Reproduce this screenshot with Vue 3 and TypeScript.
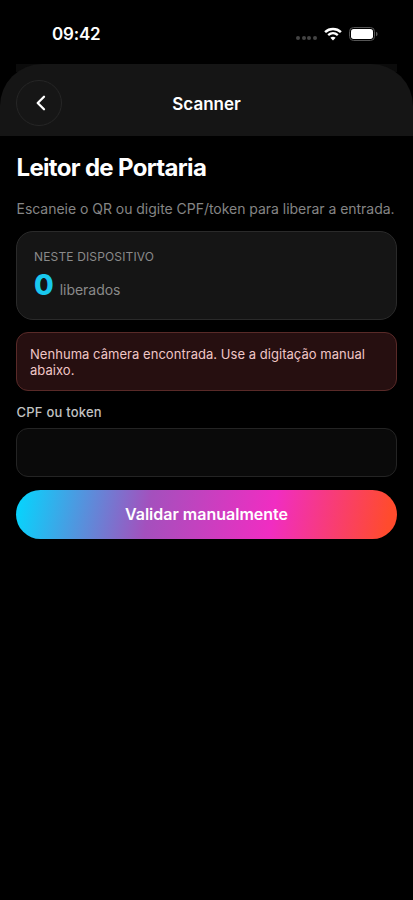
<script setup lang="ts">
import { ref } from 'vue'

const released = ref<number>(0)
const code = ref<string>('')
const signalDots: number[] = [0, 1, 2, 3]
</script>

<template>
  <div class="screen">
    <div class="status">
      <span class="clock">09:42</span>
      <div class="indicators">
        <div class="signal"><i v-for="dot in signalDots" :key="dot"></i></div>
        <svg class="wifi" width="18" height="14" viewBox="0 0 18 14" fill="none" stroke="#fff">
          <path d="M1.1 5.1C5.5.9 12.5.9 16.9 5.1" stroke-width="2.5" />
          <path d="M4.2 8.2C7 5.6 11 5.6 13.8 8.2" stroke-width="2.3" />
          <path d="M9 13.4 6.4 10.7Q9 8.6 11.6 10.7Z" fill="#fff" stroke="none" />
        </svg>
        <svg class="battery" width="29" height="14" viewBox="0 0 29 14">
          <rect x=".5" y=".5" width="25" height="13" rx="4" fill="none" stroke="#555" />
          <rect x="2" y="2" width="22" height="10" rx="2.7" fill="#fff" />
          <path d="M27 4.7Q28.6 5.2 28.6 7T27 9.3Z" fill="#555" />
        </svg>
      </div>
    </div>

    <div class="header-wrap">
      <header class="header">
        <button class="back" type="button" aria-label="Voltar">
          <svg width="24" height="24" viewBox="0 0 24 24" fill="none" stroke="#fff" stroke-width="2.3" stroke-linecap="round" stroke-linejoin="round">
            <path d="M15 5.7 8.7 12l6.3 6.3" />
          </svg>
        </button>
        <span class="header-title">Scanner</span>
      </header>
    </div>

    <main class="content">
      <h1 class="title">Leitor de Portaria</h1>
      <p class="subtitle">Escaneie o QR ou digite CPF/token para liberar a entrada.</p>

      <section class="card">
        <div class="card-label">NESTE DISPOSITIVO</div>
        <div class="count-row">
          <span class="count">{{ released }}</span>
          <span class="count-label">liberados</span>
        </div>
      </section>

      <div class="alert" role="alert">Nenhuma câmera encontrada. Use a digitação manual abaixo.</div>

      <label class="field-label" for="code">CPF ou token</label>
      <input id="code" v-model="code" class="field" type="text" />

      <button class="submit" type="button"><span>Validar manualmente</span></button>
    </main>
  </div>
</template>

<style>
body {
  background: #000;
}
</style>

<style scoped>
.screen {
  box-sizing: border-box;
  height: 900px;
  background: #000;
  color: #fff;
  font-family: Inter, sans-serif;
  overflow: hidden;
}
.status {
  box-sizing: border-box;
  height: 64px;
  padding: 3px 35.5px 0 52px;
  display: flex;
  align-items: center;
  justify-content: space-between;
}
.clock {
  font-size: 17px;
  font-weight: 600;
  letter-spacing: -0.2px;
}
.indicators {
  display: flex;
  align-items: center;
}
.signal {
  display: flex;
  gap: 1.5px;
  margin: 8px 7px 0 0;
}
.signal i {
  width: 4px;
  height: 4px;
  border-radius: 50%;
  background: #444;
}
.wifi {
  margin-right: 7px;
}
.header-wrap {
  background: linear-gradient(#0b0b0b, #0b0b0b) 50% 0 / 381px 8px no-repeat;
}
.header {
  box-sizing: border-box;
  height: 72px;
  padding: 6px 16px 0;
  display: grid;
  grid-template-columns: 46px 1fr 46px;
  align-items: center;
  background: #151515;
  border-radius: 42px 42px 0 0;
}
.back {
  box-sizing: border-box;
  width: 46px;
  height: 46px;
  padding: 0 0 0 3px;
  display: flex;
  align-items: center;
  justify-content: center;
  border: 1px solid #262626;
  border-radius: 50%;
  background: #161616;
}
.header-title {
  padding-top: 1px;
  text-align: center;
  font-size: 17px;
  font-weight: 600;
  line-height: 22px;
}
.content {
  padding: 17px 16px 0 16px;
}
.title {
  margin: 0 0.5px;
  font-size: 24px;
  line-height: 30px;
  font-weight: 700;
  letter-spacing: -0.67px;
}
.subtitle {
  margin: 16px 0.5px 12px;
  font-size: 14px;
  line-height: 20px;
  letter-spacing: -0.03px;
  color: #858585;
  white-space: nowrap;
}
.card {
  box-sizing: border-box;
  height: 89px;
  padding: 16px 17px;
  border: 1px solid #2a2a2a;
  border-radius: 17px;
  background: #151515;
}
.card-label {
  font-size: 12px;
  line-height: 17px;
  letter-spacing: 0.15px;
  color: #8a8a8a;
}
.count-row {
  display: flex;
  align-items: baseline;
  gap: 6px;
  margin-top: 3px;
}
.count {
  font-size: 28.5px;
  line-height: 34px;
  font-weight: 800;
  color: #19c8ee;
}
.count-label {
  font-size: 14px;
  letter-spacing: -0.04px;
  color: #8a8a8a;
}
.alert {
  box-sizing: border-box;
  height: 59px;
  margin-top: 12px;
  padding: 13px;
  border: 1px solid #592a28;
  border-radius: 12px;
  background: #260f10;
  color: #f0c6c6;
  font-size: 13px;
  line-height: 16px;
  letter-spacing: 0.04px;
}
.field-label {
  display: block;
  margin: 13px 0.5px 7px;
  font-size: 13px;
  line-height: 17px;
  font-weight: 500;
  letter-spacing: 0.22px;
  color: #c2c2c2;
}
.field {
  display: block;
  box-sizing: border-box;
  width: 100%;
  height: 49px;
  padding: 0 14px;
  border: 1px solid #242424;
  border-radius: 12px;
  outline: none;
  background: #0a0a0a;
  color: #fff;
  font: 16px Inter, sans-serif;
}
.submit {
  display: block;
  width: 100%;
  height: 49px;
  margin-top: 13px;
  padding: 0 0 1px;
  border: 0;
  border-radius: 25px;
  background: linear-gradient(100deg, #0bd0fb 2%, #a450bd 35%, #f02dc2 67%, #ff4b2d 97%);
  color: #fff;
  font: 600 16px/20px Inter, sans-serif;
}
</style>
